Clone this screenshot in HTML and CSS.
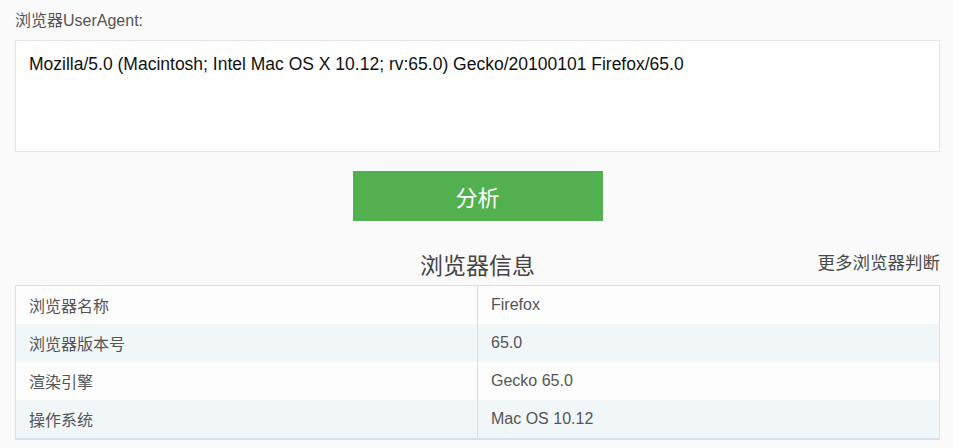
FILE: index.html
```html
<!DOCTYPE html>
<html lang="zh-CN">
<head>
<meta charset="utf-8">
<title>浏览器UserAgent</title>
<link rel="stylesheet" href="styles.css">
</head>
<body>
<div class="page">
  <div class="label">浏览器UserAgent:</div>
  <div class="ua-box">Mozilla/5.0 (Macintosh; Intel Mac OS X 10.12; rv:65.0) Gecko/20100101 Firefox/65.0</div>
  <div class="actions"><button class="btn">分析</button></div>
  <div class="info-head">
    <h2 class="info-title">浏览器信息</h2>
    <a class="more">更多浏览器判断</a>
  </div>
  <table class="info">
    <tr><td>浏览器名称</td><td>Firefox</td></tr>
    <tr><td>浏览器版本号</td><td>65.0</td></tr>
    <tr><td>渲染引擎</td><td>Gecko 65.0</td></tr>
    <tr><td>操作系统</td><td>Mac OS 10.12</td></tr>
  </table>
</div>
</body>
</html>
```
FILE: styles.css
```css
html, body {
  margin: 0;
  padding: 0;
  background: #fafafa;
}
body {
  font-family: "Liberation Sans", "Noto Sans CJK SC", sans-serif;
  color: #555;
}
.page {
  width: 925px;
  margin-left: 15px;
  padding-top: 9px;
}
.label {
  font-size: 16px;
  line-height: 24px;
  color: #555;
}
.ua-box {
  margin-top: 7px;
  height: 84px;
  background: #fff;
  border: 1px solid #e6e6e6;
  padding: 13px 13px 13px;
  font-size: 17.5px;
  line-height: 20px;
  color: #111;
}
.actions {
  display: flex;
  justify-content: center;
  margin-top: 19px;
}
.btn {
  width: 250px;
  height: 50px;
  border: 0;
  background: #53b04f;
  color: #fff;
  font-family: "Liberation Sans", "Noto Sans CJK SC", sans-serif;
  font-size: 22px;
  padding: 0;
}
.info-head {
  position: relative;
  margin-top: 21px;
  height: 43px;
  display: flex;
  justify-content: center;
  align-items: center;
}
.info-title {
  margin: 0;
  font-weight: normal;
  font-size: 23px;
  color: #444;
}
.more {
  position: absolute;
  right: 0;
  top: 0;
  line-height: 43px;
  font-size: 17.5px;
  color: #4a4a4a;
}
.info {
  width: 100%;
  border-collapse: collapse;
  border: 1px solid #d5e1ec;
  border-bottom-width: 2px;
  font-size: 16px;
  color: #555;
}
.info td {
  width: 50%;
  height: 38px;
  padding: 0 13px;
  border-left: 1px solid #d5e1ec;
}
.info tr:nth-child(odd) {
  background: #fdfdfd;
}
.info tr:nth-child(even) {
  background: #f1f6f9;
}
```
